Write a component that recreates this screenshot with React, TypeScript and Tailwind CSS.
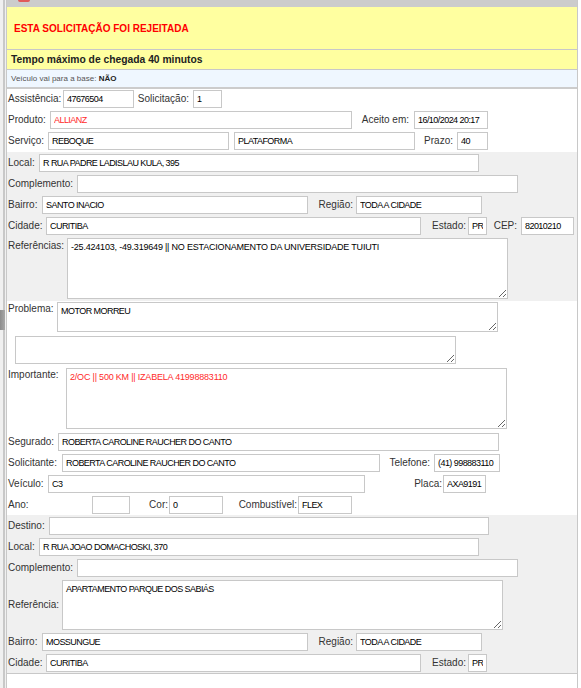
import clsx from "clsx";

function Lbl({ w, children, right, pr, className }: { w: string; children: React.ReactNode; right?: boolean; pr?: string; className?: string }) {
  return (
    <span
      className={clsx(
        "shrink-0 whitespace-nowrap text-[10px] leading-[12px] text-[#333]",
        w,
        right ? clsx("text-right", pr ?? "pr-[4px]") : "pl-px",
        className
      )}
    >
      {children}
    </span>
  );
}

function Box({ w, value = "", red }: { w: string; value?: string; red?: boolean }) {
  return (
    <input
      readOnly
      value={value}
      className={clsx(
        "h-[18px] shrink-0 border border-[#c8c8c8] bg-white px-[3px] text-[9px] tracking-[-0.55px] outline-none",
        red ? "text-[#ff2a2a]" : "text-black",
        w
      )}
    />
  );
}

// wide: some notes render with a looser font in the original
function Area({ w, h, value = "", red, wide }: { w: string; h: string; value?: string; red?: boolean; wide?: boolean }) {
  return (
    <textarea
      readOnly
      value={value}
      className={clsx(
        "block shrink-0 border border-[#c8c8c8] bg-white pl-[3px] pt-[2px] text-[9px] leading-[12px] outline-none",
        wide ? "tracking-[-0.2px]" : "tracking-[-0.55px]",
        red ? "text-[#ff2a2a]" : "text-black",
        w,
        h
      )}
    />
  );
}

export default function App() {
  return (
    <div className="flex h-[688px] w-[581px] overflow-hidden bg-white font-['Liberation_Sans',Arial,sans-serif]">
      {/* left edge strip */}
      <div className="relative flex w-[6px] shrink-0">
        <div className="w-[3px] bg-[#f0f0f0]" />
        <div className="w-[2px] bg-[#c8c8c8]" />
        <div className="w-px bg-[#f0f0f0]" />
        <div className="absolute left-0 top-[310px] h-[20px] w-[5px] bg-gradient-to-r from-[#8c8c8c] to-[#a8a8a8]" />
      </div>

      <div className="flex w-[572px] shrink-0 flex-col border-x border-[#c8c8c8]">
        {/* top bar */}
        <div className="relative h-[7px] bg-[#cccccc]">
          <span className="absolute left-[11px] top-0 h-[2px] w-[12px] rounded-b-full bg-[#e05a5a]" />
        </div>

        {/* status header */}
        <div className="flex h-[43px] items-center border-b border-[#c8c8c8] bg-[#ffffa0] pl-[7px]">
          <span className="text-[10px] font-bold text-[#ff0000]">ESTA SOLICITAÇÃO FOI REJEITADA</span>
        </div>
        <div className="flex h-[20px] items-center border-b border-[#c8c8c8] bg-[#ffffa0] pl-[4px]">
          <span className="text-[10.3px] font-bold text-[#222]">Tempo máximo de chegada 40 minutos</span>
        </div>
        <div className="flex h-[19px] items-center border-b-2 border-[#cccccc] bg-[#eff7ff] pl-[4px]">
          <span className="text-[8px] text-[#555]">
            Veículo vai para a base: <b className="text-[#222]">NÃO</b>
          </span>
        </div>

        {/* service */}
        <div className="flex flex-col gap-[3px] bg-white pb-[2px] pt-px">
          <div className="flex items-center">
            <Lbl w="w-[56px]">Assistência:</Lbl>
            <Box w="w-[71px]" value="47676504" />
            <Lbl w="w-[59px]" right>Solicitação:</Lbl>
            <Box w="w-[29px]" value="1" />
          </div>
          <div className="flex items-center">
            <Lbl w="w-[43px]">Produto:</Lbl>
            <Box w="w-[302px]" value="ALLIANZ" red />
            <Lbl w="w-[62px]" right pr="pr-[5px]">Aceito em:</Lbl>
            <Box w="w-[74px]" value="16/10/2024 20:17" />
          </div>
          <div className="flex items-center">
            <Lbl w="w-[41px]">Serviço:</Lbl>
            <Box w="w-[181px]" value="REBOQUE" />
            <span className="w-[5px] shrink-0" />
            <Box w="w-[181px]" value="PLATAFORMA" />
            <Lbl w="w-[42px]" right>Prazo:</Lbl>
            <Box w="w-[31px]" value="40" />
          </div>
        </div>

        {/* origin address */}
        <div className="flex flex-col gap-[3px] bg-[#f0f0f0] pb-[2px] pt-[2px]">
          <div className="flex items-center">
            <Lbl w="w-[32px]">Local:</Lbl>
            <Box w="w-[440px]" value="R RUA PADRE LADISLAU KULA, 395" />
          </div>
          <div className="flex items-center">
            <Lbl w="w-[70px]">Complemento:</Lbl>
            <Box w="w-[441px]" />
          </div>
          <div className="flex items-center">
            <Lbl w="w-[35px]">Bairro:</Lbl>
            <Box w="w-[266px]" value="SANTO INACIO" />
            <Lbl w="w-[48px]" right pr="pr-[3px]">Região:</Lbl>
            <Box w="w-[126px]" value="TODA A CIDADE" />
          </div>
          <div className="flex items-center">
            <Lbl w="w-[39px]">Cidade:</Lbl>
            <Box w="w-[375px]" value="CURITIBA" />
            <Lbl w="w-[47px]" right pr="pr-[2px]">Estado:</Lbl>
            <Box w="w-[19px]" value="PR" />
            <Lbl w="w-[34px]" right>CEP:</Lbl>
            <Box w="w-[53px]" value="82010210" />
          </div>
          <div className="flex items-start">
            <Lbl w="w-[60px]" className="pt-[2px]">Referências:</Lbl>
            <Area
              w="w-[441px]"
              h="h-[61px]"
              wide
              value="-25.424103, -49.319649 || NO ESTACIONAMENTO DA UNIVERSIDADE TUIUTI"
            />
          </div>
        </div>

        {/* problem and people */}
        <div className="flex flex-col bg-white pb-px pt-px">
          <div className="flex items-start">
            <Lbl w="w-[50px]" className="pt-px">Problema:</Lbl>
            <Area w="w-[441px]" h="h-[30px]" value="MOTOR MORREU" />
          </div>
          <div className="mt-[4px] flex pl-[8px]">
            <Area w="w-[441px]" h="h-[28px]" />
          </div>
          <div className="mt-[4px] flex items-start">
            <Lbl w="w-[59px]" className="pt-px">Importante:</Lbl>
            <Area w="w-[441px]" h="h-[61px]" wide value="2/OC || 500 KM || IZABELA 41998883110" red />
          </div>
          <div className="mt-[4px] flex flex-col gap-[3px]">
            <div className="flex items-center">
              <Lbl w="w-[51px]">Segurado:</Lbl>
              <Box w="w-[441px]" value="ROBERTA CAROLINE RAUCHER DO CANTO" />
            </div>
            <div className="flex items-center">
              <Lbl w="w-[55px]">Solicitante:</Lbl>
              <Box w="w-[318px]" value="ROBERTA CAROLINE RAUCHER DO CANTO" />
              <Lbl w="w-[54px]" right>Telefone:</Lbl>
              <Box w="w-[66px]" value="(41) 998883110" />
            </div>
            <div className="flex items-center">
              <Lbl w="w-[41px]">Veículo:</Lbl>
              <Box w="w-[317px]" value="C3" />
              <Lbl w="w-[78px]" right pr="pr-[1px]">Placa:</Lbl>
              <Box w="w-[43px]" value="AXA9191" />
            </div>
            <div className="flex items-center">
              <Lbl w="w-[85px]">Ano:</Lbl>
              <Box w="w-[38px]" />
              <Lbl w="w-[39px]" right pr="pr-[1px]">Cor:</Lbl>
              <Box w="w-[54px]" value="0" />
              <Lbl w="w-[75px]" right pr="pr-[1px]">Combustível:</Lbl>
              <Box w="w-[54px]" value="FLEX" />
            </div>
          </div>
        </div>

        {/* destination */}
        <div className="flex flex-col gap-[3px] border-b border-[#c8c8c8] bg-[#f0f0f0] pb-px pt-[2px]">
          <div className="flex items-center">
            <Lbl w="w-[42px]">Destino:</Lbl>
            <Box w="w-[440px]" />
          </div>
          <div className="flex items-center">
            <Lbl w="w-[32px]">Local:</Lbl>
            <Box w="w-[440px]" value="R RUA JOAO DOMACHOSKI, 370" />
          </div>
          <div className="flex items-center">
            <Lbl w="w-[70px]">Complemento:</Lbl>
            <Box w="w-[441px]" />
          </div>
          <div className="flex items-center">
            <Lbl w="w-[55px]">Referência:</Lbl>
            <Area w="w-[441px]" h="h-[50px]" value="APARTAMENTO PARQUE DOS SABIÁS" />
          </div>
          <div className="flex items-center">
            <Lbl w="w-[35px]">Bairro:</Lbl>
            <Box w="w-[266px]" value="MOSSUNGUE" />
            <Lbl w="w-[48px]" right pr="pr-[3px]">Região:</Lbl>
            <Box w="w-[126px]" value="TODA A CIDADE" />
          </div>
          <div className="flex items-center">
            <Lbl w="w-[39px]">Cidade:</Lbl>
            <Box w="w-[375px]" value="CURITIBA" />
            <Lbl w="w-[47px]" right pr="pr-[2px]">Estado:</Lbl>
            <Box w="w-[19px]" value="PR" />
          </div>
        </div>
        <div className="flex-1 bg-white" />
      </div>
    </div>
  );
}
